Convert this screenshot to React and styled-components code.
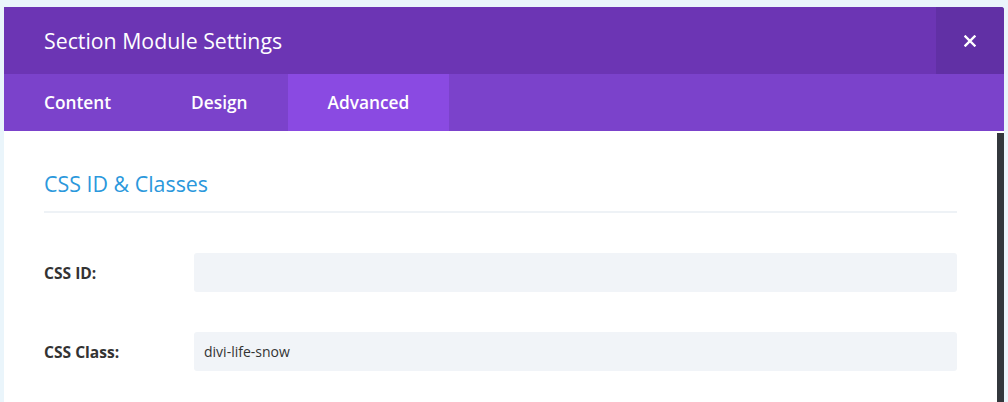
import React from 'react'
import styled, { createGlobalStyle } from 'styled-components'

const GlobalStyle = createGlobalStyle`
  html, body {
    margin: 0;
    padding: 0;
    background: #eaf5fb;
    font-family: "Open Sans", "Noto Sans", sans-serif;
    -webkit-font-smoothing: antialiased;
  }
`

const tabs = ['Content', 'Design', 'Advanced']

const fields = [
  { label: 'CSS ID:', value: '' },
  { label: 'CSS Class:', value: 'divi-life-snow' },
]

const App = () => {
  return (
    <Page>
      <GlobalStyle />
      <Modal>
        <Header>
          <Title>Section Module Settings</Title>
          <CloseButton aria-label="close">
            <svg width="12" height="12" viewBox="0 0 12 12">
              <path d="M1.5 1.5 L10.5 10.5 M10.5 1.5 L1.5 10.5" stroke="#fff" strokeWidth="2.4" strokeLinecap="square" />
            </svg>
          </CloseButton>
        </Header>
        <TabBar>
          {tabs.map((t) => (
            <Tab key={t} active={t === 'Advanced'}>
              {t}
            </Tab>
          ))}
        </TabBar>
        <Body>
          <Content>
            <SectionTitle>CSS ID &amp; Classes</SectionTitle>
            <Divider />
            {fields.map((f) => (
              <FieldRow key={f.label}>
                <Label>{f.label}</Label>
                <Input>{f.value}</Input>
              </FieldRow>
            ))}
          </Content>
          <Scrollbar />
        </Body>
      </Modal>
    </Page>
  )
}

const Page = styled.div`
  height: 402px;
  padding: 7px 4px 0;
  box-sizing: border-box;
  overflow: hidden;
`

const Modal = styled.div`
  width: 1000px;
  background: #fff;
  border-radius: 0 3px 0 0;
  overflow: hidden;
`

const Header = styled.div`
  display: flex;
  align-items: center;
  height: 67px;
  background: #6c35b4;
`

const Title = styled.div`
  flex: 1;
  padding-left: 40px;
  color: #fff;
  font-size: 21.3px;
  font-weight: 400;
`

const CloseButton = styled.div`
  width: 68px;
  height: 100%;
  display: flex;
  align-items: center;
  justify-content: center;
  background: #6130a5;
`

const TabBar = styled.div`
  display: flex;
  height: 57px;
  background: #7b42cb;
`

const Tab = styled.div`
  display: flex;
  align-items: center;
  padding: 0 40px;
  color: #fff;
  font-size: 17.3px;
  font-weight: 600;
  background: ${({ active }) => (active ? '#8a4ae2' : 'transparent')};
`

const Body = styled.div`
  display: flex;
  height: 271px;
`

const Content = styled.div`
  flex: 1;
  padding: 0 40px;
`

const SectionTitle = styled.div`
  margin-top: 37px;
  color: #2b98dc;
  font-size: 21.4px;
  font-weight: 400;
  line-height: 32px;
`

const Divider = styled.div`
  margin-top: 11px;
  height: 2px;
  background: #eef2f6;
`

const FieldRow = styled.div`
  display: flex;
  align-items: center;
  margin-top: 40px;
`

const Label = styled.div`
  width: 150px;
  color: #333;
  font-size: 15.6px;
  font-weight: 700;
`

const Input = styled.div`
  flex: 1;
  height: 39px;
  display: flex;
  align-items: center;
  padding: 0 10px;
  background: #f1f4f8;
  border-radius: 3px;
  color: #333;
  font-size: 14px;
`

const Scrollbar = styled.div`
  width: 7px;
  margin-top: 2px;
  background: #32373c;
`

export default App
